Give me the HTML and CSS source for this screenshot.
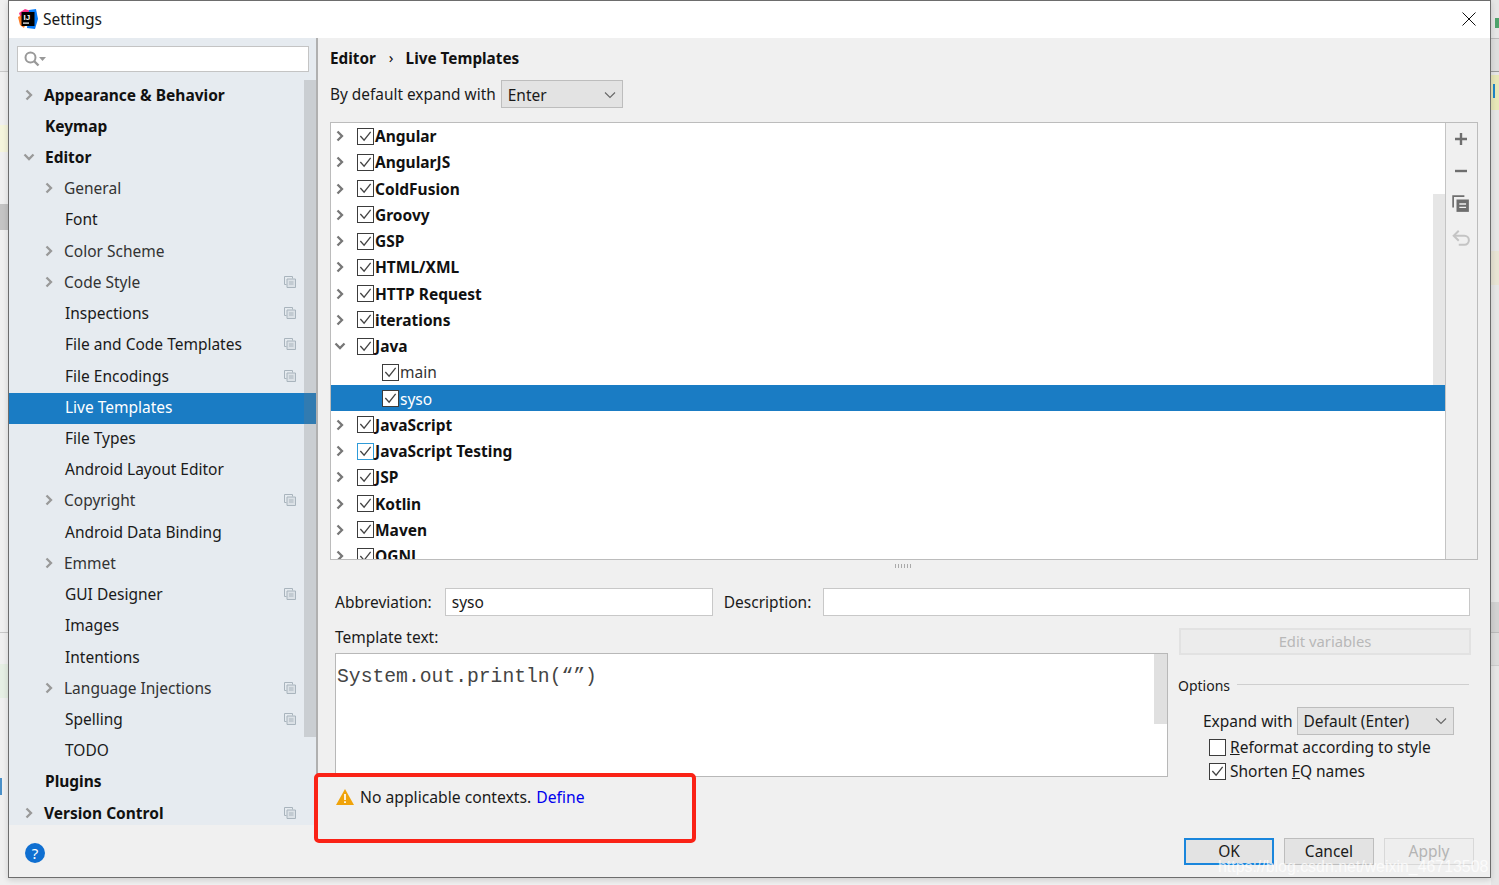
FILE: index.html
```html
<!DOCTYPE html>
<html lang="en">
<head>
  <meta charset="UTF-8">
  <title>Settings</title>
  <link rel="stylesheet" href="styles.css">
</head>
<body>
  <svg class="defs" width="0" height="0">
    <symbol id="arrow-right" viewBox="0 0 12 12"><path d="M3.500 1.500 8 6 3.500 10.500" fill="none" stroke="currentColor" stroke-width="2.300"/></symbol>
    <symbol id="arrow-down" viewBox="0 0 12 12"><path d="M1.500 3.500 6 8 10.500 3.500" fill="none" stroke="currentColor" stroke-width="2.300"/></symbol>
    <symbol id="check" viewBox="0 0 16 16"><path d="M2.500 7.500 6.500 12 13.500 3" fill="none" stroke="currentColor" stroke-width="1.400"/></symbol>
    <symbol id="project" viewBox="0 0 12 12"><path d="M.5.5h8v2M.5.5v8h2" fill="none" stroke="#a9b4bd"/><path d="M3 3h8.500v8.500H3z" fill="#dbe1e6" stroke="#a9b4bd"/><path d="M5 6h4.500M5 8h4.500" stroke="#a9b4bd"/></symbol>
  </svg>

  <!-- bits of the IDE behind the dialog -->
  <div class="ide-bit ide-top-left"></div>
  <div class="ide-bit ide-yellow-left"></div>
  <div class="ide-bit ide-grey-left"></div>
  <div class="ide-bit ide-line-left"></div>
  <div class="ide-bit ide-green-left"></div>
  <div class="ide-bit ide-link-left"></div>
  <div class="ide-bit ide-right"></div>
  <div class="ide-bit ide-top-right"></div>
  <div class="ide-bit ide-green-right"></div>
  <div class="ide-bit ide-yellow-right"></div>
  <div class="ide-bit ide-blue-right"></div>
  <div class="ide-bit ide-beige-right"></div>
  <div class="ide-bit ide-grey-right"></div>
  <div class="ide-bit ide-grey-right2"></div>

  <div class="dialog">
    <div class="titlebar">
      <svg class="app-logo" width="20" height="20" viewBox="0 0 20 20">
        <path d="M1 4 7 0 13 2 8 9 3 10z" fill="#fc318c"/>
        <path d="M0 8 4 6 8 14 6 19 2 16z" fill="#fe7d26"/>
        <path d="M11 1 18 0 20 10 17 20 9 19z" fill="#087cfa"/>
        <rect x="3.500" y="3" width="13" height="14" fill="#000"/>
        <rect x="5" y="13.500" width="6" height="1.200" fill="#fff"/>
        <text x="5.500" y="11" class="logo-text">IJ</text>
      </svg>
      <span class="title">Settings</span>
      <svg class="close" width="14" height="14" viewBox="0 0 14 14"><path d="M.5.5 13.500 13.500M13.500.5.500 13.500" stroke="#111" fill="none"/></svg>
    </div>

    <div class="main">
      <div class="sidebar">
        <div class="search">
          <svg width="24" height="16" viewBox="0 0 24 16"><circle cx="6.500" cy="6.500" r="5" fill="none" stroke="#999" stroke-width="2"/><path d="M10 10 14.500 14.500" stroke="#999" stroke-width="2.400"/><path d="M15 6h7l-3.500 4z" fill="#999"/></svg>
        </div>
        <div class="side-body">
          <div class="side-list">
            <div class="side-row bold"><svg class="side-arrow"><use href="#arrow-right"/></svg><span class="lvl-a">Appearance &amp; Behavior</span></div>
            <div class="side-row bold"><span class="lvl-b">Keymap</span></div>
            <div class="side-row bold"><svg class="side-arrow"><use href="#arrow-down"/></svg><span class="lvl-e">Editor</span></div>
            <div class="side-row sub"><svg class="side-arrow"><use href="#arrow-right"/></svg><span class="lvl-a">General</span></div>
            <div class="side-row"><span class="lvl-c">Font</span></div>
            <div class="side-row sub"><svg class="side-arrow"><use href="#arrow-right"/></svg><span class="lvl-a">Color Scheme</span></div>
            <div class="side-row sub"><svg class="side-arrow"><use href="#arrow-right"/></svg><span class="lvl-a">Code Style</span><svg class="proj"><use href="#project"/></svg></div>
            <div class="side-row"><span class="lvl-c">Inspections</span><svg class="proj"><use href="#project"/></svg></div>
            <div class="side-row"><span class="lvl-c">File and Code Templates</span><svg class="proj"><use href="#project"/></svg></div>
            <div class="side-row"><span class="lvl-c">File Encodings</span><svg class="proj"><use href="#project"/></svg></div>
            <div class="side-row selected"><span class="lvl-c">Live Templates</span></div>
            <div class="side-row"><span class="lvl-c">File Types</span></div>
            <div class="side-row"><span class="lvl-c">Android Layout Editor</span></div>
            <div class="side-row sub"><svg class="side-arrow"><use href="#arrow-right"/></svg><span class="lvl-a">Copyright</span><svg class="proj"><use href="#project"/></svg></div>
            <div class="side-row"><span class="lvl-c">Android Data Binding</span></div>
            <div class="side-row sub"><svg class="side-arrow"><use href="#arrow-right"/></svg><span class="lvl-a">Emmet</span></div>
            <div class="side-row"><span class="lvl-c">GUI Designer</span><svg class="proj"><use href="#project"/></svg></div>
            <div class="side-row"><span class="lvl-c">Images</span></div>
            <div class="side-row"><span class="lvl-c">Intentions</span></div>
            <div class="side-row sub"><svg class="side-arrow"><use href="#arrow-right"/></svg><span class="lvl-a">Language Injections</span><svg class="proj"><use href="#project"/></svg></div>
            <div class="side-row"><span class="lvl-c">Spelling</span><svg class="proj"><use href="#project"/></svg></div>
            <div class="side-row"><span class="lvl-c">TODO</span></div>
            <div class="side-row bold"><span class="lvl-b">Plugins</span></div>
            <div class="side-row bold"><svg class="side-arrow"><use href="#arrow-right"/></svg><span class="lvl-a">Version Control</span><svg class="proj"><use href="#project"/></svg></div>
          </div>
          <div class="side-scroll"><div class="side-thumb"></div></div>
        </div>
      </div>

      <div class="content">
        <div class="crumbs"><span>Editor</span><span class="crumb-sep">›</span><span>Live Templates</span></div>
        <div class="expand-row">
          <span>By default expand with</span>
          <div class="combo combo-enter"><span>Enter</span><svg width="12" height="8" viewBox="0 0 12 8"><path d="M1 1.500 6 6.500 11 1.500" fill="none" stroke="#666" stroke-width="1.100"/></svg></div>
        </div>

        <div class="tree-box">
          <div class="tree">
            <div class="tree-rows">
              <div class="t-row group"><svg class="t-arrow"><use href="#arrow-right"/></svg><span class="cb"><svg><use href="#check"/></svg></span>Angular</div>
              <div class="t-row group"><svg class="t-arrow"><use href="#arrow-right"/></svg><span class="cb"><svg><use href="#check"/></svg></span>AngularJS</div>
              <div class="t-row group"><svg class="t-arrow"><use href="#arrow-right"/></svg><span class="cb"><svg><use href="#check"/></svg></span>ColdFusion</div>
              <div class="t-row group"><svg class="t-arrow"><use href="#arrow-right"/></svg><span class="cb"><svg><use href="#check"/></svg></span>Groovy</div>
              <div class="t-row group"><svg class="t-arrow"><use href="#arrow-right"/></svg><span class="cb"><svg><use href="#check"/></svg></span>GSP</div>
              <div class="t-row group"><svg class="t-arrow"><use href="#arrow-right"/></svg><span class="cb"><svg><use href="#check"/></svg></span>HTML/XML</div>
              <div class="t-row group"><svg class="t-arrow"><use href="#arrow-right"/></svg><span class="cb"><svg><use href="#check"/></svg></span>HTTP Request</div>
              <div class="t-row group"><svg class="t-arrow"><use href="#arrow-right"/></svg><span class="cb"><svg><use href="#check"/></svg></span>iterations</div>
              <div class="t-row group"><svg class="t-arrow"><use href="#arrow-down"/></svg><span class="cb"><svg><use href="#check"/></svg></span>Java</div>
              <div class="t-row child"><span class="cb"><svg><use href="#check"/></svg></span>main</div>
              <div class="t-row child t-selected"><span class="cb"><svg><use href="#check"/></svg></span>syso</div>
              <div class="t-row group"><svg class="t-arrow"><use href="#arrow-right"/></svg><span class="cb"><svg><use href="#check"/></svg></span>JavaScript</div>
              <div class="t-row group"><svg class="t-arrow"><use href="#arrow-right"/></svg><span class="cb cb-focus"><svg><use href="#check"/></svg></span>JavaScript Testing</div>
              <div class="t-row group"><svg class="t-arrow"><use href="#arrow-right"/></svg><span class="cb"><svg><use href="#check"/></svg></span>JSP</div>
              <div class="t-row group"><svg class="t-arrow"><use href="#arrow-right"/></svg><span class="cb"><svg><use href="#check"/></svg></span>Kotlin</div>
              <div class="t-row group"><svg class="t-arrow"><use href="#arrow-right"/></svg><span class="cb"><svg><use href="#check"/></svg></span>Maven</div>
              <div class="t-row group"><svg class="t-arrow"><use href="#arrow-right"/></svg><span class="cb"><svg><use href="#check"/></svg></span>OGNL</div>
            </div>
            <div class="tree-thumb"></div>
          </div>
          <div class="tree-tools">
            <svg width="16" height="16" viewBox="0 0 16 16"><path d="M8 2v12M2 8h12" stroke="#6e6e6e" stroke-width="2.400"/></svg>
            <svg width="16" height="16" viewBox="0 0 16 16"><path d="M2 8h12" stroke="#6e6e6e" stroke-width="2.400"/></svg>
            <svg width="18" height="18" viewBox="0 0 16 16"><path d="M1 11V1h10" fill="none" stroke="#6e6e6e" stroke-width="1.500"/><path d="M4 4h11v11H4z" fill="#6e6e6e"/><path d="M6.500 8h6M6.500 11h6" stroke="#f0f0f0" stroke-width="1.300"/></svg>
            <svg width="18" height="18" viewBox="0 0 16 16"><path d="M2 6h9a4 4 0 0 1 0 8H6" fill="none" stroke="#c4c4c4" stroke-width="1.800"/><path d="M6 1.500 1.500 6 6 10.500" fill="none" stroke="#c4c4c4" stroke-width="1.800"/></svg>
          </div>
        </div>

        <div class="splitter"><span></span></div>

        <div class="abbrev-row">
          <label>Abbreviation:</label>
          <div class="field field-abbrev">syso</div>
          <label class="desc-label">Description:</label>
          <div class="field field-desc"></div>
        </div>

        <div class="lower">
          <div class="lower-left">
            <div class="tpl-label">Template text:</div>
            <div class="tpl-editor">
              <div class="tpl-code">System.out.println(“”)</div>
              <div class="tpl-scroll"></div>
            </div>
            <div class="warning">
              <svg width="18" height="16" viewBox="0 0 18 16"><path d="M9 0 18 16H0z" fill="#f0a30a"/><path d="M9 5v6M9 12.200v1.800" stroke="#fff" stroke-width="1.700"/></svg>
              <span>No applicable contexts.</span><a class="define">Define</a>
            </div>
          </div>
          <div class="lower-right">
            <div class="btn btn-edit">Edit variables</div>
            <div class="options-head"><span>Options</span><i></i></div>
            <div class="expand-with">
              <span>Expand with</span>
              <div class="combo combo-default"><span>Default (Enter)</span><svg width="12" height="8" viewBox="0 0 12 8"><path d="M1 1.500 6 6.500 11 1.500" fill="none" stroke="#666" stroke-width="1.100"/></svg></div>
            </div>
            <div class="opt-row"><span class="cb"></span><span><u>R</u>eformat according to style</span></div>
            <div class="opt-row"><span class="cb"><svg><use href="#check"/></svg></span><span>Shorten <u>F</u>Q names</span></div>
          </div>
        </div>
      </div>
    </div>

    <div class="footer">
      <div class="help">?</div>
      <div class="footer-btns">
        <div class="btn btn-ok">OK</div>
        <div class="btn">Cancel</div>
        <div class="btn btn-off">Apply</div>
      </div>
    </div>

    <div class="red-box"></div>
    <div class="watermark">https://blog.csdn.net/weixin_46713508</div>
  </div>
</body>
</html>
```

FILE: styles.css
```css
/* page behind the dialog */
body {
  margin: 0;
  width: 1499px;
  height: 885px;
  overflow: hidden;
  position: relative;
  background: #f0f0f0;
  font-family: "Noto Sans", "Open Sans", sans-serif;
  font-size: 15px;
  color: #1a1a1a;
}

.defs {
  position: absolute;
}

.ide-bit {
  position: absolute;
}
.ide-top-left {
  left: 0;
  top: 40px;
  width: 8px;
  height: 31px;
  background: #ebebeb;
  border-bottom: 1px solid #c8c8c8;
}
.ide-yellow-left {
  left: 0;
  top: 125px;
  width: 8px;
  height: 27px;
  background: #f5f5dc;
}
.ide-grey-left {
  left: 0;
  top: 204px;
  width: 8px;
  height: 26px;
  background: #c4c4c4;
}
.ide-line-left {
  left: 0;
  top: 632px;
  width: 8px;
  height: 1px;
  background: #c8c8c8;
}
.ide-green-left {
  left: 0;
  top: 664px;
  width: 8px;
  height: 34px;
  background: #e6efe4;
}
.ide-link-left {
  left: 0;
  top: 778px;
  width: 2px;
  height: 17px;
  background: #4a90c8;
}
.ide-right {
  left: 1491px;
  top: 0;
  width: 8px;
  height: 885px;
  background: #e6e6e6;
}
.ide-top-right {
  left: 1491px;
  top: 38px;
  width: 8px;
  height: 32px;
  background: #dedede;
  border-top: 1px solid #bbb;
  border-bottom: 1px solid #999;
}
.ide-green-right {
  left: 1495px;
  top: 18px;
  width: 4px;
  height: 10px;
  background: #4ea36c;
}
.ide-yellow-right {
  left: 1491px;
  top: 75px;
  width: 8px;
  height: 35px;
  background: #e8e7b8;
}
.ide-blue-right {
  left: 1493px;
  top: 84px;
  width: 2px;
  height: 14px;
  background: #1f86c8;
}
.ide-beige-right {
  left: 1491px;
  top: 251px;
  width: 8px;
  height: 34px;
  background: #e8e4d4;
}
.ide-grey-right {
  left: 1491px;
  top: 602px;
  width: 8px;
  height: 30px;
  background: #d2d2d2;
}
.ide-grey-right2 {
  left: 1491px;
  top: 632px;
  width: 8px;
  height: 32px;
  background: #dcdcdc;
  border-top: 1px solid #bbb;
  border-bottom: 1px solid #ccc;
}

/* dialog frame */
.dialog {
  position: absolute;
  left: 8px;
  top: 0;
  width: 1483px;
  height: 878px;
  box-sizing: border-box;
  border: 1px solid #6d6d6d;
  background: #f0f0f0;
  display: flex;
  flex-direction: column;
  box-shadow: 0 2px 6px rgba(0, 0, 0, 0.15);
}

.titlebar {
  height: 37px;
  box-sizing: border-box;
  padding: 0 14px 2px 9px;
  flex: none;
  background: #fff;
  display: flex;
  align-items: center;
}
.app-logo {
  margin-right: 5px;
  overflow: visible;
}
.logo-text {
  font-family: "Liberation Sans", sans-serif;
  font-size: 8px;
  font-weight: 700;
  fill: #fff;
}
.title {
  font-size: 15.500px;
  flex: 1;
}

.main {
  height: 787px;
  flex: none;
  display: flex;
}

/* left settings tree */
.sidebar {
  width: 307px;
  flex: none;
  background: #e6ebf0;
  border-right: 2px solid #b0b0b0;
  display: flex;
  flex-direction: column;
}
.search {
  height: 26px;
  margin: 8px 7px 7px 8px;
  box-sizing: border-box;
  background: #fff;
  border: 1px solid #c4c4c4;
  display: flex;
  align-items: center;
  padding-left: 6px;
}
.side-body {
  flex: 1;
  display: flex;
  min-height: 0;
}
.side-list {
  flex: 1;
  min-width: 0;
  padding-top: 2px;
}
.side-row {
  height: 31.22px;
  box-sizing: border-box;
  padding-bottom: 4px;
  display: flex;
  align-items: center;
  white-space: nowrap;
  font-size: 15.500px;
  margin-right: -12px;
  padding-right: 20px;
  position: relative;
  z-index: 1;
}
.side-row.bold {
  font-weight: 700;
  color: #111;
  padding-left: 14px;
}
.side-row.sub {
  padding-left: 34px;
  color: #333;
}
.side-row .lvl-c {
  margin-left: 56px;
}
.side-row .lvl-b {
  margin-left: 22px;
}
.side-row .lvl-a {
  margin-left: 9px;
}
.side-row .lvl-e {
  margin-left: 10px;
}
.side-row.selected {
  background: #1a7cc4;
  color: #fff;
}
.side-arrow {
  width: 12px;
  height: 12px;
  color: #999;
  flex: none;
}
.proj {
  width: 12px;
  height: 12px;
  margin-left: auto;
}
.side-scroll {
  width: 12px;
  flex: none;
  padding-top: 1px;
}
.side-thumb {
  height: 657px;
  background: rgba(120, 120, 120, 0.25);
  position: relative;
  z-index: 2;
}

/* right part */
.content {
  flex: 1;
  min-width: 0;
  padding: 0 12px 0 12px;
}
.crumbs {
  height: 40px;
  margin-bottom: 2px;
  display: flex;
  align-items: center;
  gap: 12px;
  font-weight: 700;
  font-size: 15.300px;
  color: #111;
}
.crumb-sep {
  font-weight: 400;
  margin: 0 0 2px 1px;
}
.expand-row {
  display: flex;
  align-items: center;
  gap: 5px;
  height: 28px;
  margin-bottom: 14px;
  font-size: 15.400px;
}
.combo {
  box-sizing: border-box;
  height: 28px;
  background: #e3e3e3;
  border: 1px solid #bdbdbd;
  display: flex;
  align-items: center;
  justify-content: space-between;
  padding: 0 6px;
  font-size: 15.500px;
}
.combo-enter {
  width: 122px;
  padding-top: 2px;
}

/* templates tree */
.tree-box {
  height: 438px;
  box-sizing: border-box;
  width: 1148px;
  border: 1px solid #bcbcbc;
  display: flex;
}
.tree {
  flex: 1;
  min-width: 0;
  background: #fff;
  overflow: hidden;
  position: relative;
}
.tree-rows {
  margin-top: -1px;
  position: relative;
  z-index: 1;
}
.t-row {
  height: 26.25px;
  box-sizing: border-box;
  padding-top: 2px;
  display: flex;
  align-items: center;
  font-size: 15.500px;
  white-space: nowrap;
}
.t-row.group {
  font-weight: 700;
  color: #111;
  padding-left: 3px;
}
.t-row.child {
  padding-left: 51px;
  color: #333;
}
.t-row.t-selected {
  background: #1a7cc4;
  color: #fff;
}
.t-row.t-selected .cb {
  background: #fff;
}
.t-arrow {
  width: 12px;
  height: 12px;
  color: #777;
  flex: none;
  margin-right: 11px;
}
.cb {
  box-sizing: border-box;
  width: 17px;
  height: 17px;
  flex: none;
  margin-right: 1px;
  background: #fff;
  border: 1px solid #3c3c3c;
  display: inline-block;
  color: #444;
}
.cb svg {
  display: block;
  width: 15px;
  height: 15px;
}
.cb.cb-focus {
  border-color: #2f9bd8;
}
.tree-thumb {
  position: absolute;
  right: 0;
  top: 71px;
  width: 12px;
  height: 191px;
  background: #e6e6e6;
}
.tree-tools {
  width: 32px;
  flex: none;
  box-sizing: border-box;
  border-left: 1px solid #c4c4c4;
  background: #f0f0f0;
  display: flex;
  flex-direction: column;
  align-items: center;
  padding: 8px 1px 0 0;
  gap: 16px;
}

.splitter {
  height: 28px;
  display: flex;
  justify-content: center;
  padding-top: 4px;
  box-sizing: border-box;
}
.splitter span {
  width: 18px;
  height: 4px;
  background: repeating-linear-gradient(90deg, #aaa 0 1px, transparent 1px 3px);
}

.abbrev-row {
  display: flex;
  align-items: center;
  height: 28px;
  padding-left: 5px;
  font-size: 15.500px;
}
.field {
  box-sizing: border-box;
  height: 28px;
  background: #fff;
  border: 1px solid #c8c8c8;
  padding: 0 6px;
  line-height: 26px;
}
.field-abbrev {
  width: 268px;
  margin-left: 13px;
}
.desc-label {
  margin-left: 11px;
}
.field-desc {
  width: 647px;
  margin-left: 11.500px;
}

.lower {
  display: flex;
}
.lower-left {
  width: 833px;
  margin-left: 5px;
}
.tpl-label {
  height: 25px;
  margin: 9px 0 3px;
  line-height: 25px;
  font-size: 15.500px;
}
.tpl-editor {
  box-sizing: border-box;
  height: 124px;
  background: #fff;
  border: 1px solid #b8b8b8;
  display: flex;
  justify-content: space-between;
}
.tpl-code {
  font-family: "Liberation Mono", monospace;
  font-size: 19.700px;
  color: #444;
  padding: 12px 0 0 1px;
}
.tpl-scroll {
  width: 13px;
  height: 70px;
  background: #e0e0e0;
}
.warning {
  display: flex;
  align-items: center;
  height: 39px;
  margin-left: 1px;
  font-size: 15.700px;
}
.warning svg {
  margin-right: 6px;
}
.define {
  color: #0000ee;
  margin-left: 5px;
}

.lower-right {
  width: 293px;
  margin-left: 10px;
  font-size: 15.500px;
}
.btn {
  box-sizing: border-box;
  width: 90px;
  height: 27px;
  background: #e3e3e3;
  border: 1px solid #bdbdbd;
  text-align: center;
  line-height: 25px;
  font-size: 15.500px;
}
.btn-edit {
  width: 292px;
  margin: 12px 0 0 1px;
  background: #ececec;
  color: #b8b8b8;
  border: 2px solid #e2e2e2;
  line-height: 23px;
  font-size: 14.800px;
}
.options-head {
  display: flex;
  align-items: center;
  gap: 7px;
  height: 20px;
  margin-top: 20px;
  font-size: 14px;
}
.options-head i {
  flex: 1;
  height: 1px;
  background: #cfcfcf;
  margin: 0 2px 2px 0;
}
.expand-with {
  display: flex;
  align-items: center;
  gap: 4px;
  margin: 12px 0 0 25px;
}
.combo-default {
  width: 157px;
}
.opt-row {
  display: flex;
  align-items: center;
  gap: 3px;
  height: 24px;
  margin-left: 31px;
}

/* bottom strip */
.footer {
  flex: 1;
  display: flex;
  align-items: flex-start;
  justify-content: space-between;
  padding: 13px 16px 0 16px;
}
.help {
  width: 20px;
  height: 20px;
  margin-top: 5px;
  border-radius: 50%;
  background: #0f6fd1;
  color: #fff;
  text-align: center;
  line-height: 20px;
  font-size: 15px;
}
.footer-btns {
  display: flex;
  gap: 10px;
}
.btn-ok {
  border: 2px solid #1a86dc;
  line-height: 23px;
}
.btn-off {
  background: #eee;
  border-color: #d8d8d8;
  color: #b4b4b4;
}

/* annotation on top of the shot */
.red-box {
  position: absolute;
  left: 305px;
  top: 772px;
  width: 382px;
  height: 70px;
  box-sizing: border-box;
  border: 4px solid #fa2216;
  border-radius: 5px;
}
.watermark {
  position: absolute;
  left: 1209px;
  top: 857px;
  font-family: "Liberation Sans", sans-serif;
  font-size: 15.900px;
  color: rgba(255, 255, 255, 0.75);
  white-space: nowrap;
}
```
